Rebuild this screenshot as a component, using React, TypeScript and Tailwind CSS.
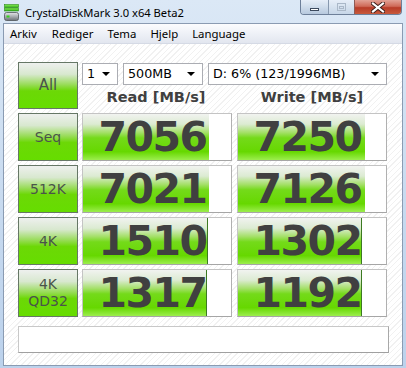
import React from "react";

const rows = [
  { label: ["Seq"], read: "7056", readW: 126, write: "7250", writeW: 127, edge: false },
  { label: ["512K"], read: "7021", readW: 126, write: "7126", writeW: 127, edge: false },
  { label: ["4K"], read: "1510", readW: 125, write: "1302", writeW: 124, edge: true },
  { label: ["4K", "QD32"], read: "1317", readW: 124, write: "1192", writeW: 124, edge: true },
];

const ui = { fontFamily: '"Noto Sans", "Open Sans", sans-serif' };
const tahoma = { fontFamily: '"DejaVu Sans", Verdana, sans-serif' };

function AppIcon() {
  return (
    <svg width="16" height="18" viewBox="0 0 16 18">
      <defs>
        <linearGradient id="grn" x1="0" y1="0" x2="0" y2="1">
          <stop offset="0" stopColor="#8ef05a" />
          <stop offset="1" stopColor="#2fae16" />
        </linearGradient>
        <linearGradient id="drv" x1="0" y1="0" x2="0" y2="1">
          <stop offset="0" stopColor="#e4e6e8" />
          <stop offset="0.5" stopColor="#a9adb2" />
          <stop offset="1" stopColor="#6d7277" />
        </linearGradient>
      </defs>
      <rect x="0.5" y="0.5" width="14" height="3" fill="url(#grn)" stroke="#2a8a1a" strokeWidth="0.6" />
      <rect x="0.5" y="4" width="14" height="3" fill="url(#grn)" stroke="#2a8a1a" strokeWidth="0.6" />
      <rect x="0.5" y="8.5" width="14" height="8" rx="2" fill="url(#drv)" stroke="#4f5458" strokeWidth="0.8" />
      <rect x="2.5" y="11.5" width="3" height="2" fill="#37d21c" />
    </svg>
  );
}

function CloseGlyph() {
  return (
    <svg width="14" height="11" viewBox="0 0 14 11">
      <path d="M2 1.5 L12 9.5 M12 1.5 L2 9.5" stroke="#3a1e1a" strokeWidth="4" strokeLinecap="square" />
      <path d="M2 1.5 L12 9.5 M12 1.5 L2 9.5" stroke="#ffffff" strokeWidth="2.2" strokeLinecap="square" />
    </svg>
  );
}

function Select({ w, text }: { w: number; text: string }) {
  return (
    <div
      className="h-[22px] bg-white border border-[#abadb3] flex items-center pl-[4px] pr-[7px] text-[12.7px] text-black"
      style={{ ...tahoma, width: w }}
    >
      <span className="flex-1 leading-none">{text}</span>
      <span className="w-0 h-0 border-l-[4px] border-r-[4px] border-t-[4px] border-l-transparent border-r-transparent border-t-black" />
    </div>
  );
}

function Cell({ value, w, edge }: { value: string; w: number; edge: boolean }) {
  return (
    <div className="relative w-[150px] h-[48px] bg-white border border-[#c4c4c4] border-b-[#a6a6a6] border-r-[#b0b0b0]">
      <div
        className={`absolute left-0 top-0 bottom-0 bg-[linear-gradient(180deg,#f1f3f0_0%,#dcebd2_22%,#a5e06a_40%,#74da1a_52%,#66d800_82%,#9cee4e_100%)] ${edge ? "border-r border-r-[#3c7a22]" : ""}`}
        style={{ width: w }}
      />
      <div
        className="relative h-full flex items-center justify-center pr-[9px] pt-[1px] text-[41px] font-bold text-[#404040] leading-none tracking-[-1.5px]"
        style={tahoma}
      >
        {value}
      </div>
    </div>
  );
}

function SideButton({ lines, h = 48 }: { lines: string[]; h?: number }) {
  return (
    <div
      className="w-[60px] flex flex-col items-center justify-center border border-[#667766] bg-[linear-gradient(180deg,#eef0ee_0%,#d8e8cf_25%,#98dc58_48%,#6cd806_62%,#66dd00_100%)] text-[#4a544a] leading-[17px]"
      style={{ ...tahoma, height: h }}
    >
      {lines.map((l) => (
        <span key={l} className={l === "All" ? "text-[15px]" : "text-[14px]"}>
          {l}
        </span>
      ))}
    </div>
  );
}

export default function App() {
  return (
    <div className="w-[406px] h-[368px] overflow-hidden bg-[linear-gradient(180deg,#dbe8f6_0%,#c6d9ef_60%,#bcd2ec_100%)]" style={ui}>
      {/* title bar */}
      <div className="h-[23px] flex">
        <div className="flex items-center pl-[4px] pt-[2px] gap-[5px]">
          <AppIcon />
          <span className="text-[11.2px] text-black leading-none">CrystalDiskMark 3.0 x64 Beta2</span>
        </div>
        <div className="ml-auto mr-[4px] flex h-[15px] rounded-b-[4px] border border-t-0 border-[#6d7f99] overflow-hidden">
          <div className="w-[28px] flex items-center justify-center bg-[linear-gradient(180deg,#e6eef8_0%,#cfdceb_50%,#b7c9de_100%)] border-r border-[#8798ae]">
            <div className="w-[9px] h-[3px] mt-[4px] bg-white border border-[#3c4a5e]" />
          </div>
          <div className="w-[26px] flex items-center justify-center bg-[linear-gradient(180deg,#e6eef8_0%,#d6e2ef_50%,#c6d6e8_100%)] border-r border-[#8e5a54]">
            <div className="w-[9px] h-[8px] border border-[#aab8c8] flex items-center justify-center">
              <div className="w-[5px] h-[3px] border border-[#aab8c8]" />
            </div>
          </div>
          <div className="w-[46px] flex items-center justify-center bg-[linear-gradient(180deg,#e2a296_0%,#cf6a58_45%,#b83c28_55%,#c75a3c_100%)]">
            <CloseGlyph />
          </div>
        </div>
      </div>

      {/* client */}
      <div className="mx-[3px] h-[343px] border border-[#8a9bb2] bg-white flex flex-col">
        <div className="h-[20px] flex items-center text-[11.4px] text-black bg-[linear-gradient(180deg,#fbfcfe_0%,#eef1f7_50%,#e2e6ef_100%)] border-b border-[#d5dae5]">
          <span className="ml-[6px]">Arkiv</span>
          <span className="ml-[15px]">Rediger</span>
          <span className="ml-[14px]">Tema</span>
          <span className="ml-[14px]">Hjelp</span>
          <span className="ml-[14px]">Language</span>
        </div>

        <div className="flex-1 pt-[18px] pl-[14px] bg-[repeating-linear-gradient(135deg,#ffffff_0px,#ffffff_3px,#f1f1f1_3px,#f1f1f1_4px)]">
          <div className="flex">
            <SideButton lines={["All"]} h={47} />
            <div className="ml-[4px] flex flex-col">
              <div className="mt-[1px] flex">
                <Select w={36} text="1" />
                <div className="ml-[5px]">
                  <Select w={80} text="500MB" />
                </div>
                <div className="ml-[5px]">
                  <Select w={179} text="D: 6% (123/1996MB)" />
                </div>
              </div>
              <div className="mt-[4px] flex h-[17px] text-[14.5px] font-bold text-[#404040] leading-none" style={tahoma}>
                <div className="w-[150px] flex items-center justify-center pr-[2px]">Read [MB/s]</div>
                <div className="ml-[5px] w-[150px] flex items-center justify-center">Write [MB/s]</div>
              </div>
            </div>
          </div>

          <div className="mt-[4px] flex flex-col gap-[4px]">
            {rows.map((r) => (
              <div key={r.read} className="flex">
                <SideButton lines={r.label} />
                <div className="ml-[4px]">
                  <Cell value={r.read} w={r.readW} edge={r.edge} />
                </div>
                <div className="ml-[5px]">
                  <Cell value={r.write} w={r.writeW} edge={r.edge} />
                </div>
              </div>
            ))}
          </div>

          <div className="mt-[9px] w-[371px] h-[27px] bg-white border border-[#c8c8c8] border-b-[#a0a0a0] border-r-[#a8a8a8]" />
        </div>
      </div>
    </div>
  );
}
